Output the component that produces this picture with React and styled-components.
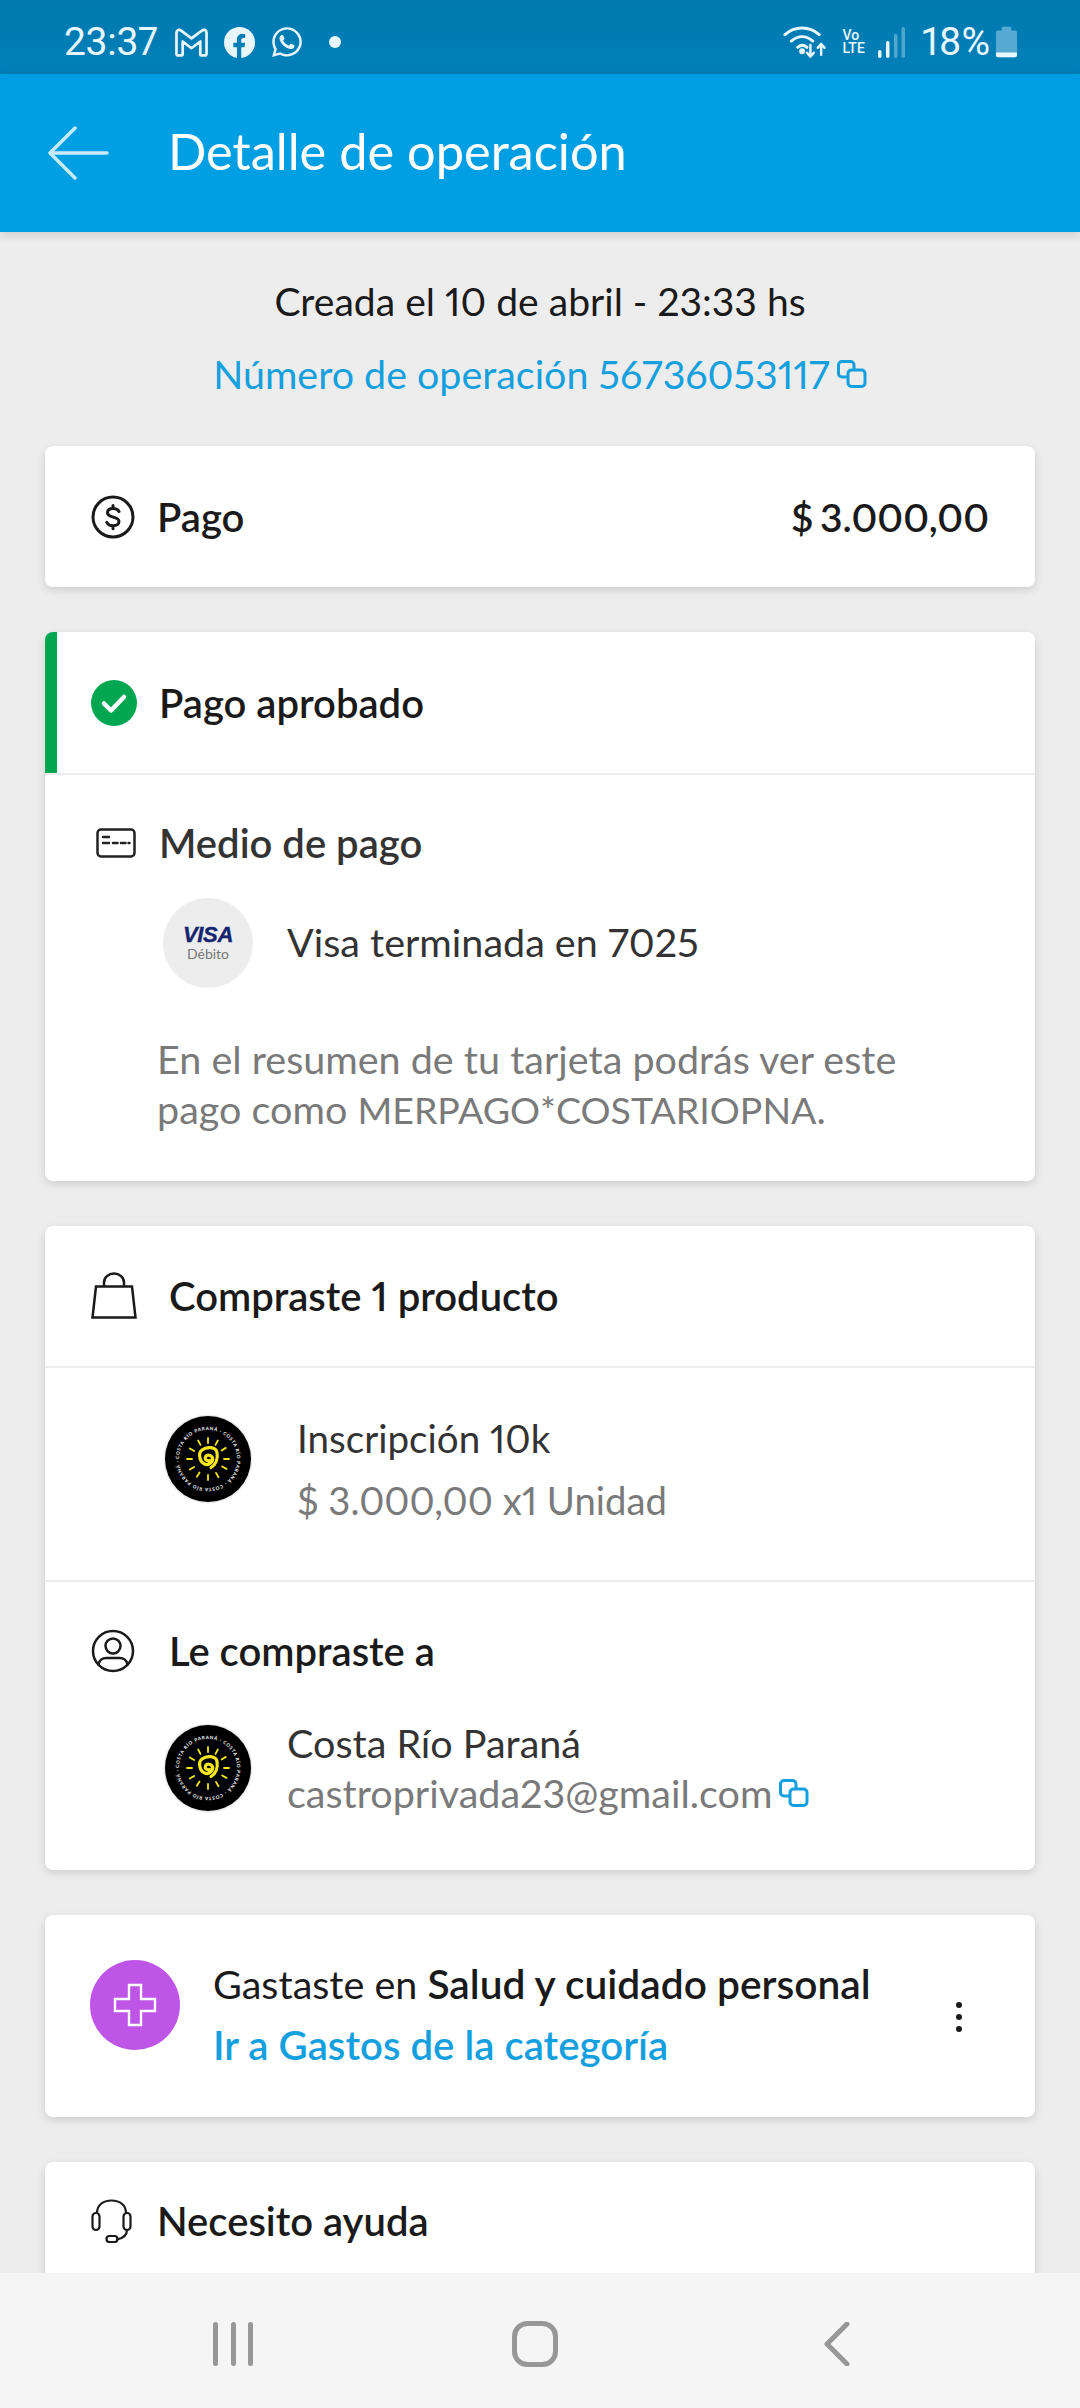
import React from 'react'
import styled, { createGlobalStyle } from 'styled-components'
import { FaWhatsapp } from 'react-icons/fa'

const GlobalStyle = createGlobalStyle`
  html, body {
    margin: 0;
    padding: 0;
    background: #ededed;
  }
  * {
    box-sizing: border-box;
  }
`

const Screen = styled.div`
  width: 1080px;
  height: 2408px;
  display: flex;
  flex-direction: column;
  overflow: hidden;
  background: #ededed;
  font-family: Lato, "Noto Sans", sans-serif;
  font-variant-numeric: proportional-nums;
  color: #1a1a1a;
`

const StatusBar = styled.div`
  height: 74px;
  flex: none;
  display: flex;
  align-items: center;
  justify-content: space-between;
  padding: 10px 63px 0 64px;
  background: linear-gradient(#007ab0, #007fb8);
  color: #e8f6fd;
  font-family: Roboto, sans-serif;
`

const StatusGroup = styled.div`
  display: flex;
  align-items: center;
  gap: ${(p) => p.$gap || 0}px;
`

const Clock = styled.span`
  font-size: 39px;
  letter-spacing: -0.3px;
  margin-right: 1px;
`

const Battery = styled.span`
  font-size: 39px;
  margin: 0 6px 0 17px;
`

const VoLte = styled.span`
  display: flex;
  flex-direction: column;
  align-items: flex-start;
  font-size: 14px;
  line-height: 13px;
  font-weight: 500;
  margin: 0 12px 0 15px;
`

const StatusDot = styled.i`
  display: block;
  width: 12px;
  height: 12px;
  border-radius: 50%;
  background: #e8f6fd;
  margin-left: 10px;
`

const Header = styled.header`
  height: 158px;
  flex: none;
  display: flex;
  align-items: center;
  padding: 0 0 0 48px;
  background: #009ee3;
  color: #fff;
  box-shadow: 0 3px 10px rgba(0, 0, 0, 0.14);
  position: relative;
  z-index: 2;
`

const Title = styled.h1`
  margin: 0 0 6px 59px;
  font-size: 50.5px;
  font-weight: 400;
`

const Content = styled.main`
  flex: 1;
  min-height: 0;
  overflow: hidden;
  display: flex;
  flex-direction: column;
  padding: 0 45px;
`

const Meta = styled.div`
  display: flex;
  flex-direction: column;
  align-items: center;
  padding-top: 45px;
  margin-bottom: 48px;
`

const Created = styled.div`
  font-size: 39.1px;
  line-height: 48px;
`

const OperationNumber = styled.div`
  display: flex;
  align-items: center;
  gap: 7px;
  margin-top: 25px;
  color: #14a0de;
  font-size: 39.4px;
  line-height: 48px;
`

const Card = styled.section`
  flex: none;
  background: #fff;
  border-radius: 8px;
  box-shadow: 0 3px 8px rgba(0, 0, 0, 0.13);
  margin-bottom: 45px;
  position: relative;
  overflow: hidden;
`

const AccentBar = styled.div`
  position: absolute;
  left: 0;
  top: 0;
  width: 12px;
  height: 141px;
  background: #00a650;
`

const HeadRow = styled.div`
  height: ${(p) => p.$height || 141}px;
  display: flex;
  align-items: center;
  padding: 0 46px;
  border-bottom: ${(p) => (p.$line ? '2px solid #ededed' : 'none')};
`

const IconSlot = styled.div`
  width: ${(p) => p.$width || 68}px;
  flex: none;
  display: flex;
  align-items: center;
  padding-left: ${(p) => p.$inset || 0}px;
`

const HeadText = styled.div`
  font-size: 40px;
  font-weight: 600;
  color: ${(p) => p.$color || '#1a1a1a'};
`

const Amount = styled.div`
  margin-left: auto;
  font-size: 39px;
  font-weight: 600;
  word-spacing: -3px;
`

const Section = styled.div`
  padding: ${(p) => p.$padding};
  border-bottom: ${(p) => (p.$line ? '2px solid #ededed' : 'none')};
`

const MediaRow = styled.div`
  display: flex;
  align-items: center;
  margin-top: ${(p) => p.$top || 0}px;
  padding-left: 118px;
  padding-bottom: ${(p) => p.$bottom || 0}px;
`

const ProductRow = styled.div`
  height: 212px;
  display: flex;
  align-items: flex-start;
  padding: 46px 0 0 118px;
`

const VisaBadge = styled.div`
  width: 90px;
  height: 90px;
  flex: none;
  border-radius: 50%;
  background: #ededed;
  display: flex;
  flex-direction: column;
  align-items: center;
  justify-content: center;
`

const VisaMark = styled.span`
  font-family: "Liberation Sans", sans-serif;
  font-size: 22px;
  line-height: 20px;
  font-weight: 700;
  font-style: italic;
  color: #14246e;
  letter-spacing: -0.3px;
  -webkit-text-stroke: 0.4px #14246e;
`

const VisaKind = styled.span`
  font-size: 14px;
  line-height: 17px;
  color: #777;
`

const BodyText = styled.div`
  font-size: ${(p) => p.$size || 39.5}px;
  line-height: 48px;
  color: ${(p) => p.$color || '#333'};
  margin: ${(p) => p.$margin || 0};
  white-space: nowrap;
`

const TextStack = styled.div`
  display: flex;
  flex-direction: column;
  margin-left: ${(p) => p.$left}px;
  margin-top: ${(p) => p.$top || 0}px;
`

const EmailLine = styled.div`
  display: flex;
  align-items: center;
  gap: 7px;
  margin-top: 2px;
`

const Note = styled.p`
  margin: 46px 0 0 112px;
  font-size: 39.5px;
  line-height: 50px;
  color: #7a7a7a;
  white-space: nowrap;
`

const Caps = styled.span`
  font-size: 37.5px;
`

const CategoryRow = styled.div`
  height: 202px;
  display: flex;
  align-items: flex-start;
  padding: 45px 46px 0 45px;
`

const CategoryIcon = styled.div`
  width: 90px;
  height: 90px;
  flex: none;
  border-radius: 50%;
  background: #bf55e6;
  display: flex;
  align-items: center;
  justify-content: center;
`

const Strong = styled.b`
  font-size: 40.7px;
  font-weight: 600;
`

const CategoryLink = styled.a`
  color: #14a0de;
  font-size: 40.2px;
  font-weight: 600;
  line-height: 48px;
  margin-top: 13px;
`

const DotsButton = styled.div`
  margin: 42px 27px 0 auto;
  display: flex;
  flex-direction: column;
  gap: 6px;
`

const Dot = styled.i`
  display: block;
  width: 6px;
  height: 6px;
  border-radius: 50%;
  background: #1a1a1a;
`

const NavBar = styled.nav`
  height: 135px;
  flex: none;
  display: grid;
  grid-template-columns: repeat(3, 302px);
  align-items: center;
  justify-items: center;
  background: #f5f5f5;
  padding: 7px 0 0 82px;
  position: relative;
  z-index: 2;
`

const stroke = { fill: 'none', stroke: 'currentColor', strokeLinecap: 'round', strokeLinejoin: 'round' }

const CopyIcon = () => (
  <svg width="30" height="28" viewBox="0 0 30 28" fill="none" stroke="#14a0de" strokeWidth="3">
    <path d="M11 17H5a3.500 3.500 0 0 1-3.500-3.500V5A3.500 3.500 0 0 1 5 1.500h8.500A3.500 3.500 0 0 1 17 5v5" />
    <rect x="11" y="10" width="17" height="16.500" rx="3.500" />
  </svg>
)

const DollarIcon = () => (
  <svg width="44" height="44" viewBox="0 0 44 44" {...stroke} color="#1a1a1a" strokeWidth="3">
    <circle cx="22" cy="22" r="20" />
    <path d="M28 16.500c-1-2-3-3-6-3-3.500 0-5.500 1.700-5.500 4.200 0 5.800 11.500 3 11.500 8.800 0 2.500-2.300 4.200-5.800 4.200-3.200 0-5.400-1.200-6.400-3.400M22 10.500v3M22 30.700v3" />
  </svg>
)

const CheckIcon = () => (
  <svg width="46" height="46" viewBox="0 0 46 46">
    <circle cx="23" cy="23" r="23" fill="#00a650" />
    <path d="M13 23.500l7 7 13-13.500" fill="none" stroke="#fff" strokeWidth="4.500" strokeLinecap="round" strokeLinejoin="round" />
  </svg>
)

const CardIcon = () => (
  <svg width="40" height="30" viewBox="0 0 40 30" {...stroke} color="#222" strokeWidth="2.500">
    <rect x="1.500" y="1.500" width="37" height="27" rx="3.500" />
    <path d="M7 9h6M7 15h6M17 15h4.500M25 15h4.500M32.500 15h1" />
  </svg>
)

const BagIcon = () => (
  <svg width="46" height="48" viewBox="0 0 46 48" {...stroke} color="#1a1a1a" strokeWidth="2.500" strokeLinecap="butt" strokeLinejoin="miter">
    <path d="M5 14.500h36L44.500 45.500H1.500z" />
    <path d="M13 14.500v-4a10 9 0 0 1 20 0v4" />
  </svg>
)

const UserIcon = () => (
  <svg width="44" height="44" viewBox="0 0 44 44" {...stroke} color="#1a1a1a" strokeWidth="2.500">
    <circle cx="22" cy="22" r="20" />
    <circle cx="22" cy="17" r="7.500" />
    <path d="M7.500 35.500c1-5 4-6.500 8-6.500h13c4 0 7 1.500 8 6.500" />
  </svg>
)

const CrossIcon = () => (
  <svg width="44" height="44" viewBox="0 0 44 44" fill="none" stroke="#fff" strokeWidth="2.400">
    <path d="M16 2h12v14h14v12H28v14H16V28H2V16h14z" />
  </svg>
)

const HeadsetIcon = () => (
  <svg width="42" height="44" viewBox="0 0 42 44" {...stroke} color="#1a1a1a" strokeWidth="2.200">
    <rect x="1.500" y="14" width="7" height="17" rx="3.500" />
    <rect x="32.500" y="14" width="7" height="17" rx="3.500" />
    <path d="M6 14C6 6 12 1.500 20.500 1.500S35 6 35 14M36 31c0 5-3 8-10 9.500" />
    <rect x="15.500" y="37" width="11" height="6" rx="3" />
  </svg>
)

const BackArrow = () => (
  <svg width="61" height="54" viewBox="0 0 61 54" {...stroke} color="#c6ebfb" strokeWidth="3.500">
    <path d="M59 27H3M27 2L2 27l25 25" />
  </svg>
)

const GmailIcon = () => (
  <svg width="35" height="29" viewBox="0 0 33 28" {...stroke} strokeWidth="2.600">
    <path d="M2 4.500c0-2.500 2.500-3.500 4.500-2L16.500 10l10-7.500c2-1.500 4.500-.5 4.500 2V25a1.500 1.500 0 0 1-1.500 1.500H26a1 1 0 0 1-1-1V13l-8.500 6.500L8 13v12.500a1 1 0 0 1-1 1H3.500A1.500 1.500 0 0 1 2 25z" />
  </svg>
)

const FacebookIcon = () => (
  <svg width="31" height="31" viewBox="0 0 30 30">
    <circle cx="15" cy="15" r="15" fill="#e8f6fd" />
    <path d="M12.500 30V19.500H9v-4.300h3.500v-3C12.500 8.700 14.500 6.800 17.700 6.800c1.300 0 2.800.2 2.800.2v3.600h-1.700c-1.600 0-2.100 1-2.100 2v2.600h3.700l-.6 4.300h-3.100V30z" fill="#007db5" />
  </svg>
)

const WifiIcon = () => (
  <svg width="45" height="34" viewBox="0 0 46 34" {...stroke} strokeWidth="3">
    <path d="M2 9.500C12 .5 27 .5 37 9.500M8.500 16c7-6 15-6 22 0M15 22.500c3.500-3 6-3 9.500 0" />
    <circle cx="19.500" cy="26.500" r="1.500" fill="currentColor" />
    <path d="M28 20v11M24.500 28l3.500 4 3.500-4M39 30V19M35.500 23l3.500-4 3.500 4" strokeWidth="2.500" />
  </svg>
)

const SignalIcon = () => (
  <svg width="28" height="32" viewBox="0 0 28 32" fill="#e8f6fd">
    <rect x="1" y="24" width="3.500" height="8" rx="1.700" />
    <rect x="9" y="15" width="3.500" height="17" rx="1.700" />
    <rect x="17" y="8" width="3.500" height="24" rx="1.700" opacity="0.35" />
    <rect x="24.500" y="1" width="3.500" height="31" rx="1.700" opacity="0.35" />
  </svg>
)

const BatteryIcon = () => (
  <svg width="21" height="32" viewBox="0 0 22 32">
    <path d="M7 0h8a1 1 0 0 1 1 1v3h4a2 2 0 0 1 2 2v24a2 2 0 0 1-2 2H2a2 2 0 0 1-2-2V6a2 2 0 0 1 2-2h4V1a1 1 0 0 1 1-1z" fill="#55a9d3" />
    <path d="M0 27h22v3a2 2 0 0 1-2 2H2a2 2 0 0 1-2-2z" fill="#e8f6fd" />
  </svg>
)

const rays = [0, 28, 58, 90, 118, 150, 180, 212, 240, 270, 300, 332]

const StoreLogo = ({ id }) => (
  <svg width="90" height="90" viewBox="0 0 90 90">
    <circle cx="45" cy="45" r="44.500" fill="#ececec" />
    <circle cx="45" cy="45" r="43" fill="#000" />
    <path id={id} d="M16 45a29 29 0 1 1 58 0a29 29 0 1 1-58 0" fill="none" />
    <text fontFamily="Lato, sans-serif" fontSize="4.600" fontWeight="700" fill="#fff">
      <textPath href={`#${id}`} textLength="180">COSTA RÍO PARANÁ · COSTA RÍO PARANÁ · COSTA RÍO PARANÁ ·</textPath>
    </text>
    {rays.map((a) => (
      <path key={a} d="M45 29v-5" transform={`rotate(${a} 45 45)`} stroke="#f6e71a" strokeWidth="1.800" strokeLinecap="round" />
    ))}
    <path d="M46.500 46.500c-2.500 1-5-1-4-3.500s6-2.500 7 1-3.500 8-8 6-7-10.500-2.500-14 14-3.500 15 2.500-1 12-6 15" fill="none" stroke="#f6e71a" strokeWidth="3.200" strokeLinecap="round" />
  </svg>
)

const App = () => (
  <Screen>
    <GlobalStyle />
    <StatusBar>
      <StatusGroup $gap={15}>
        <Clock>23:37</Clock>
        <GmailIcon />
        <FacebookIcon />
        <FaWhatsapp size={34} />
        <StatusDot />
      </StatusGroup>
      <StatusGroup>
        <WifiIcon />
        <VoLte>
          <span>Vo</span>
          <span>LTE</span>
        </VoLte>
        <SignalIcon />
        <Battery>18%</Battery>
        <BatteryIcon />
      </StatusGroup>
    </StatusBar>

    <Header>
      <BackArrow />
      <Title>Detalle de operación</Title>
    </Header>

    <Content>
      <Meta>
        <Created>Creada el 10 de abril - 23:33 hs</Created>
        <OperationNumber>
          Número de operación 56736053117
          <CopyIcon />
        </OperationNumber>
      </Meta>

      <Card>
        <HeadRow>
          <IconSlot $width={66}><DollarIcon /></IconSlot>
          <HeadText>Pago</HeadText>
          <Amount>$ 3.000,00</Amount>
        </HeadRow>
      </Card>

      <Card>
        <AccentBar />
        <HeadRow $line $height={143}>
          <IconSlot><CheckIcon /></IconSlot>
          <HeadText>Pago aprobado</HeadText>
        </HeadRow>
        <Section $padding="44px 46px 46px 0">
          <HeadRow $height={48}>
            <IconSlot $width={68} $inset={5}><CardIcon /></IconSlot>
            <HeadText $color="#333">Medio de pago</HeadText>
          </HeadRow>
          <MediaRow $top={31}>
            <VisaBadge>
              <VisaMark>VISA</VisaMark>
              <VisaKind>Débito</VisaKind>
            </VisaBadge>
            <TextStack $left={34} $top={-3}>
              <BodyText>Visa terminada en 7025</BodyText>
            </TextStack>
          </MediaRow>
          <Note>
            En el resumen de tu tarjeta podrás ver este
            <br />
            pago como <Caps>MERPAGO*COSTARIOPNA</Caps>.
          </Note>
        </Section>
      </Card>

      <Card>
        <HeadRow $line $height={142}>
          <IconSlot $width={78}><BagIcon /></IconSlot>
          <HeadText>Compraste 1 producto</HeadText>
        </HeadRow>
        <Section $line $padding="0 46px 0 0">
          <ProductRow>
            <StoreLogo id="logoRingProduct" />
            <TextStack $left={44}>
              <BodyText $size={38.6}>Inscripción 10k</BodyText>
              <BodyText $size={38.3} $color="#7a7a7a" $margin="14px 0 0">$ 3.000,00 x1 Unidad</BodyText>
            </TextStack>
          </ProductRow>
        </Section>
        <HeadRow $height={137}>
          <IconSlot $width={78}><UserIcon /></IconSlot>
          <HeadText>Le compraste a</HeadText>
        </HeadRow>
        <MediaRow $bottom={53}>
          <StoreLogo id="logoRingSeller" />
          <TextStack $left={34}>
            <BodyText>Costa Río Paraná</BodyText>
            <EmailLine>
              <BodyText $color="#7a7a7a">castroprivada23@gmail.com</BodyText>
              <CopyIcon />
            </EmailLine>
          </TextStack>
        </MediaRow>
      </Card>

      <Card>
        <CategoryRow>
          <CategoryIcon><CrossIcon /></CategoryIcon>
          <TextStack $left={33}>
            <BodyText $color="#1a1a1a">
              Gastaste en <Strong>Salud y cuidado personal</Strong>
            </BodyText>
            <CategoryLink>Ir a Gastos de la categoría</CategoryLink>
          </TextStack>
          <DotsButton>
            <Dot />
            <Dot />
            <Dot />
          </DotsButton>
        </CategoryRow>
      </Card>

      <Card>
        <HeadRow $height={118}>
          <IconSlot $width={66}><HeadsetIcon /></IconSlot>
          <HeadText>Necesito ayuda</HeadText>
        </HeadRow>
        <Section $padding="0 0 120px" />
      </Card>
    </Content>

    <NavBar>
      <svg width="40" height="44" viewBox="0 0 40 44" fill="#979797">
        <rect x="0" y="0" width="5" height="44" rx="2.500" />
        <rect x="18" y="0" width="5" height="44" rx="2.500" />
        <rect x="35" y="0" width="5" height="44" rx="2.500" />
      </svg>
      <svg width="46" height="46" viewBox="0 0 46 46" fill="none" stroke="#979797" strokeWidth="5">
        <rect x="2.500" y="2.500" width="41" height="41" rx="13" />
      </svg>
      <svg width="26" height="44" viewBox="0 0 26 44" fill="none" stroke="#979797" strokeWidth="5" strokeLinecap="round" strokeLinejoin="round">
        <path d="M23 2L3 22l20 20" />
      </svg>
    </NavBar>
  </Screen>
)

export default App
